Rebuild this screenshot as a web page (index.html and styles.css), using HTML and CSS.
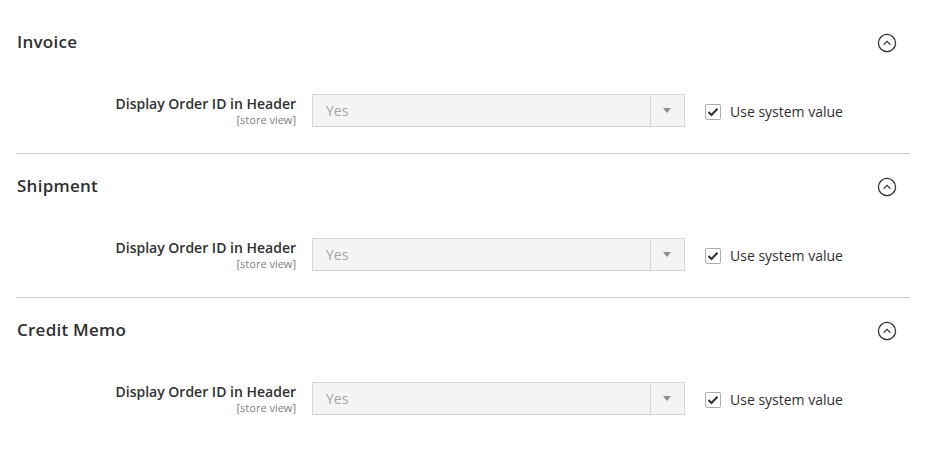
FILE: index.html
```html
<!DOCTYPE html>
<html lang="en">

<head>
    <meta charset="UTF-8">
    <title>Sales PDF Print-outs</title>
    <link rel="stylesheet" href="styles.css">
</head>

<body>
    <div class="config">
        <div class="section">
            <div class="section-head">
                <h2>Invoice</h2>
                <span class="toggle">
                    <svg width="20" height="20" viewBox="0 0 20 20"><circle cx="10" cy="10" r="8.6" fill="none" stroke="#333" stroke-width="1.3"/><path d="M6.6 11.6 L10 8.3 L13.4 11.6" fill="none" stroke="#333" stroke-width="1.3"/></svg>
                </span>
            </div>
            <div class="field">
                <div class="label">
                    <span class="name">Display Order ID in Header</span>
                    <span class="scope">[store view]</span>
                </div>
                <div class="select">
                    <span class="value">Yes</span>
                    <span class="arrow"></span>
                </div>
                <label class="use-default">
                    <span class="check">
                        <svg width="12" height="10" viewBox="0 0 12 10"><path d="M1.5 5 L4.5 8 L10.5 1.8" fill="none" stroke="#303030" stroke-width="2"/></svg>
                    </span>
                    Use system value
                </label>
            </div>
        </div>
        <div class="section">
            <div class="section-head">
                <h2>Shipment</h2>
                <span class="toggle">
                    <svg width="20" height="20" viewBox="0 0 20 20"><circle cx="10" cy="10" r="8.6" fill="none" stroke="#333" stroke-width="1.3"/><path d="M6.6 11.6 L10 8.3 L13.4 11.6" fill="none" stroke="#333" stroke-width="1.3"/></svg>
                </span>
            </div>
            <div class="field">
                <div class="label">
                    <span class="name">Display Order ID in Header</span>
                    <span class="scope">[store view]</span>
                </div>
                <div class="select">
                    <span class="value">Yes</span>
                    <span class="arrow"></span>
                </div>
                <label class="use-default">
                    <span class="check">
                        <svg width="12" height="10" viewBox="0 0 12 10"><path d="M1.5 5 L4.5 8 L10.5 1.8" fill="none" stroke="#303030" stroke-width="2"/></svg>
                    </span>
                    Use system value
                </label>
            </div>
        </div>
        <div class="section last">
            <div class="section-head">
                <h2>Credit Memo</h2>
                <span class="toggle">
                    <svg width="20" height="20" viewBox="0 0 20 20"><circle cx="10" cy="10" r="8.6" fill="none" stroke="#333" stroke-width="1.3"/><path d="M6.6 11.6 L10 8.3 L13.4 11.6" fill="none" stroke="#333" stroke-width="1.3"/></svg>
                </span>
            </div>
            <div class="field">
                <div class="label">
                    <span class="name">Display Order ID in Header</span>
                    <span class="scope">[store view]</span>
                </div>
                <div class="select">
                    <span class="value">Yes</span>
                    <span class="arrow"></span>
                </div>
                <label class="use-default">
                    <span class="check">
                        <svg width="12" height="10" viewBox="0 0 12 10"><path d="M1.5 5 L4.5 8 L10.5 1.8" fill="none" stroke="#303030" stroke-width="2"/></svg>
                    </span>
                    Use system value
                </label>
            </div>
        </div>
    </div>
</body>

</html>
```

FILE: styles.css
```css
html,
body {
    margin: 0;
    padding: 0;
    background: #fff;
    font-family: "Open Sans", "Noto Sans", sans-serif;
    color: #303030;
}

.config {
    padding: 10px 27px 0 17px;
}

.section {
    height: 143px;
    border-bottom: 1px solid #ccc;
}

.section.last {
    border-bottom: none;
}

.section-head {
    height: 62px;
    display: flex;
    align-items: center;
    justify-content: space-between;
}

.section-head h2 {
    margin: 0;
    font-size: 17px;
    font-weight: 600;
    color: #303030;
    letter-spacing: 0.25px;
}

.toggle {
    display: flex;
    margin-right: 13px;
    margin-top: 3px;
}

.field {
    margin-top: 22px;
    display: flex;
    align-items: flex-start;
}

.label {
    width: 279px;
    padding-top: 1px;
    display: flex;
    flex-direction: column;
    align-items: flex-end;
}

.label .name {
    font-size: 14px;
    font-weight: 600;
    line-height: 18px;
    color: #303030;
}

.label .scope {
    font-size: 11px;
    line-height: 14px;
    color: #808080;
}

.select {
    margin-left: 16px;
    width: 373px;
    height: 33px;
    box-sizing: border-box;
    border: 1px solid #d6d6d6;
    background: #f4f4f4;
    display: flex;
    align-items: center;
}

.select .value {
    flex: 1;
    padding-left: 13px;
    font-size: 14px;
    color: #a6a6a6;
}

.select .arrow {
    width: 33px;
    height: 31px;
    border-left: 1px solid #d6d6d6;
    position: relative;
}

.select .arrow::after {
    content: "";
    position: absolute;
    left: 12px;
    top: 13px;
    border-left: 4px solid transparent;
    border-right: 4px solid transparent;
    border-top: 5px solid #8f8f8f;
}

.use-default {
    margin-left: 20px;
    margin-top: 8px;
    display: flex;
    align-items: center;
    font-size: 14px;
    color: #303030;
}

.check {
    width: 16px;
    height: 16px;
    box-sizing: border-box;
    border: 1px solid #adadad;
    border-radius: 2px;
    background: #fff;
    display: flex;
    align-items: center;
    justify-content: center;
    margin-right: 9px;
}
```
